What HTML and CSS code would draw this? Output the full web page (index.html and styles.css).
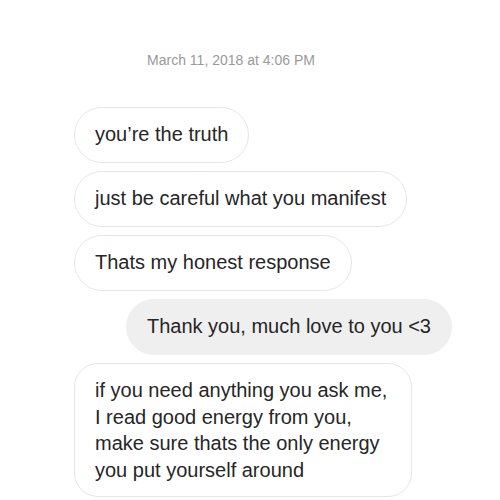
FILE: index.html
```html
<!DOCTYPE html>
<html>
<head>
<meta charset="utf-8">
<link rel="stylesheet" href="styles.css">
</head>
<body>
<div class="page">
  <div class="timestamp">March 11, 2018 at 4:06 PM</div>
  <div class="thread">
    <div class="bubble in">you’re the truth</div>
    <div class="bubble in">just be careful what you manifest</div>
    <div class="bubble in">Thats my honest response</div>
    <div class="bubble out">Thank you, much love to you &lt;3</div>
    <div class="bubble in multi">if you need anything you ask me,<br>I read good energy from you,<br>make sure thats the only energy<br>you put yourself around</div>
  </div>
</div>
</body>
</html>
```

FILE: styles.css
```css
html, body {
  margin: 0;
  padding: 0;
  background: #ffffff;
}
.page {
  width: 500px;
  height: 500px;
  overflow: hidden;
  font-family: "Liberation Sans", Arial, sans-serif;
  color: #262626;
}
.timestamp {
  width: 462px;
  padding-top: 52px;
  text-align: center;
  font-size: 14px;
  line-height: 17px;
  color: #9a9a9a;
}
.thread {
  margin-top: 38px;
  padding-left: 74px;
  width: 378px;
  display: flex;
  flex-direction: column;
  align-items: flex-start;
  gap: 8px;
}
.bubble {
  box-sizing: border-box;
  height: 56px;
  padding: 0 20px;
  border: 1.5px solid #e6e6e6;
  border-radius: 28px;
  font-size: 20px;
  line-height: 53px;
  white-space: nowrap;
}
.bubble.out {
  align-self: flex-end;
  background: #efefef;
  border-color: #efefef;
  padding: 0 20px;
}
.bubble.multi {
  height: 134px;
  padding: 13px 20px;
  line-height: 26.5px;
  border-radius: 24px;
  width: 338px;
}
```
